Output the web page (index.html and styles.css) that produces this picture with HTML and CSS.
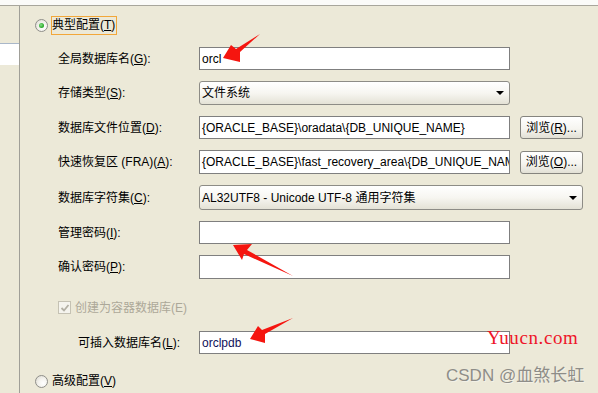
FILE: index.html
```html
<!DOCTYPE html>
<html lang="zh-CN">
<head>
<meta charset="utf-8">
<title>典型配置</title>
<link rel="stylesheet" href="styles.css">
</head>
<body>
<div class="topbar"></div>
<div class="wrap">
  <aside class="side"><div class="side-item"></div></aside>
  <main class="main">
    <div class="opt">
      <span class="radio checked"></span>
      <span class="opt-label focus">典型配置(<u>T</u>)</span>
    </div>
    <div class="form">
      <div class="row h23"><span class="lbl">全局数据库名(<u>G</u>):</span><div class="field">orcl</div></div>
      <div class="row h24"><span class="lbl">存储类型(<u>S</u>):</span><div class="select">文件系统<span class="caret"></span></div></div>
      <div class="row h23"><span class="lbl">数据库文件位置(<u>D</u>):</span><div class="field">{ORACLE_BASE}\oradata\{DB_UNIQUE_NAME}</div><div class="btn">浏览(<u>R</u>)...</div></div>
      <div class="row h24"><span class="lbl">快速恢复区 (FRA)(<u>A</u>):</span><div class="field">{ORACLE_BASE}\fast_recovery_area\{DB_UNIQUE_NAME}</div><div class="btn">浏览(<u>O</u>)...</div></div>
      <div class="row h25"><span class="lbl">数据库字符集(<u>C</u>):</span><div class="select wide">AL32UTF8 - Unicode UTF-8 通用字符集<span class="caret"></span></div></div>
      <div class="row h23"><span class="lbl">管理密码(<u>I</u>):</span><div class="field"></div></div>
      <div class="row h24"><span class="lbl">确认密码(<u>P</u>):</span><div class="field"></div></div>
      <div class="check-row"><span class="checkbox"><svg width="10" height="10" viewBox="0 0 10 10"><path d="M1.5 5 L4 7.5 L8.5 2" fill="none" stroke="#b3b0a4" stroke-width="1.8"/></svg></span><span class="check-label">创建为容器数据库(E)</span></div>
      <div class="row h23 sub"><span class="lbl">可插入数据库名(<u>L</u>):</span><div class="field pdb">orclpdb</div></div>
    </div>
    <div class="opt opt2">
      <span class="radio"></span>
      <span class="opt-label">高级配置(<u>V</u>)</span>
    </div>
  </main>
</div>
<svg class="arrows" width="598" height="393" viewBox="0 0 598 393">
  <polygon points="223,58 231,45 236,49 260,34 240,52 240,62" fill="#f5150f"/>
  <polygon points="233,245 252,244 247,250 293,276 244,254 242,260" fill="#f5150f"/>
  <polygon points="250,339 258,326 262,330 293,318 265,334 265,343" fill="#f5150f"/>
</svg>
<div class="wm">Yuucn.com</div>
<div class="csdn">CSDN @血煞长虹</div>
</body>
</html>
```
FILE: styles.css
```css
* { box-sizing: border-box; }
html, body { margin: 0; padding: 0; }
body {
  width: 598px;
  height: 393px;
  overflow: hidden;
  position: relative;
  background: #ece9d8;
  font-family: "Liberation Sans", "Noto Sans CJK SC", sans-serif;
  font-size: 12px;
  line-height: 14px;
  color: #000;
}
u { text-decoration: underline; text-underline-offset: 1px; }

.topbar {
  height: 6px;
  background: #fbfbf9;
  border-bottom: 1px solid #a8a69c;
}
.wrap { display: flex; height: 387px; }
.side {
  width: 20px;
  border-right: 1px solid #a09f98;
}
.side-item {
  margin-top: 37px;
  height: 22px;
  background: #fff;
  border-top: 1px solid #a9b7c9;
}
.main {
  flex: 1;
  padding-left: 15px;
  padding-top: 10px;
}
.opt {
  display: flex;
  align-items: center;
  height: 19px;
}
.radio {
  width: 13px;
  height: 13px;
  border-radius: 50%;
  border: 1px solid #8f8f8a;
  background: radial-gradient(circle at 65% 65%, #ffffff 0%, #f4f3ee 45%, #d8d6cc 100%);
  margin-right: 3px;
  position: relative;
  flex: none;
}
.radio.checked::after {
  content: "";
  position: absolute;
  left: 3px;
  top: 3px;
  width: 5px;
  height: 5px;
  border-radius: 50%;
  background: radial-gradient(circle at 40% 40%, #8be08b 0%, #2fae2f 60%, #1f8a1f 100%);
}
.opt-label {
  height: 19px;
  line-height: 17px;
  padding: 0 1px 0 0;
  border: 1px solid transparent;
}
.opt-label.focus { border-color: #f2a73a; }

.form {
  margin-left: 23px;
  margin-top: 12px;
  display: flex;
  flex-direction: column;
  gap: 11px;
}
.row { display: flex; align-items: center; }
.h23 { height: 23px; }
.h24 { height: 24px; }
.h25 { height: 25px; }
.lbl { width: 141px; flex: none; }
.sub { margin-top: 5px; }
.sub .lbl { width: 121px; margin-left: 20px; }

.field {
  width: 311px;
  height: 100%;
  background: #fff;
  border: 1px solid #7f7f7f;
  padding-left: 2px;
  display: flex;
  align-items: center;
  white-space: nowrap;
  overflow: hidden;
}
.field.pdb { color: #10105a; }

.select {
  position: relative;
  width: 311px;
  height: 100%;
  border: 1px solid #8d8c86;
  border-radius: 3px;
  background: linear-gradient(#ffffff 0%, #f7f6f1 50%, #e4e2d6 100%);
  padding-left: 2px;
  display: flex;
  align-items: center;
  white-space: nowrap;
}
.select.wide { width: 384px; }
.caret {
  position: absolute;
  right: 5px;
  top: 50%;
  margin-top: -2px;
  width: 0;
  height: 0;
  border-left: 4px solid transparent;
  border-right: 4px solid transparent;
  border-top: 4px solid #000;
}

.btn {
  margin-left: 10px;
  width: 63px;
  height: 23px;
  border: 1px solid #85847e;
  border-radius: 3px;
  background: linear-gradient(#ffffff 0%, #f6f5f0 55%, #e2e0d5 100%);
  display: flex;
  align-items: center;
  justify-content: center;
  flex: none;
}

.check-row {
  display: flex;
  align-items: center;
  height: 15px;
  margin-top: 10px;
}
.checkbox {
  width: 13px;
  height: 13px;
  border: 1px solid #c5c2b4;
  background: #f5f4ee;
  display: flex;
  align-items: center;
  justify-content: center;
  margin-right: 4px;
}
.check-label { color: #aca899; }

.opt2 { margin-top: 18px; }

.arrows {
  position: absolute;
  left: 0;
  top: 0;
  pointer-events: none;
}
.wm {
  position: absolute;
  left: 487px;
  top: 328px;
  font-family: "Liberation Serif", serif;
  font-size: 19px;
  line-height: 20px;
  letter-spacing: 0.6px;
  color: #ee1528;
}
.csdn {
  position: absolute;
  left: 446px;
  top: 366px;
  font-family: "Liberation Sans", "Noto Sans CJK SC", sans-serif;
  font-size: 17px;
  line-height: 20px;
  color: #8e8d88;
  text-shadow: 1px 1px 0 rgba(255,255,255,0.4);
}
```
